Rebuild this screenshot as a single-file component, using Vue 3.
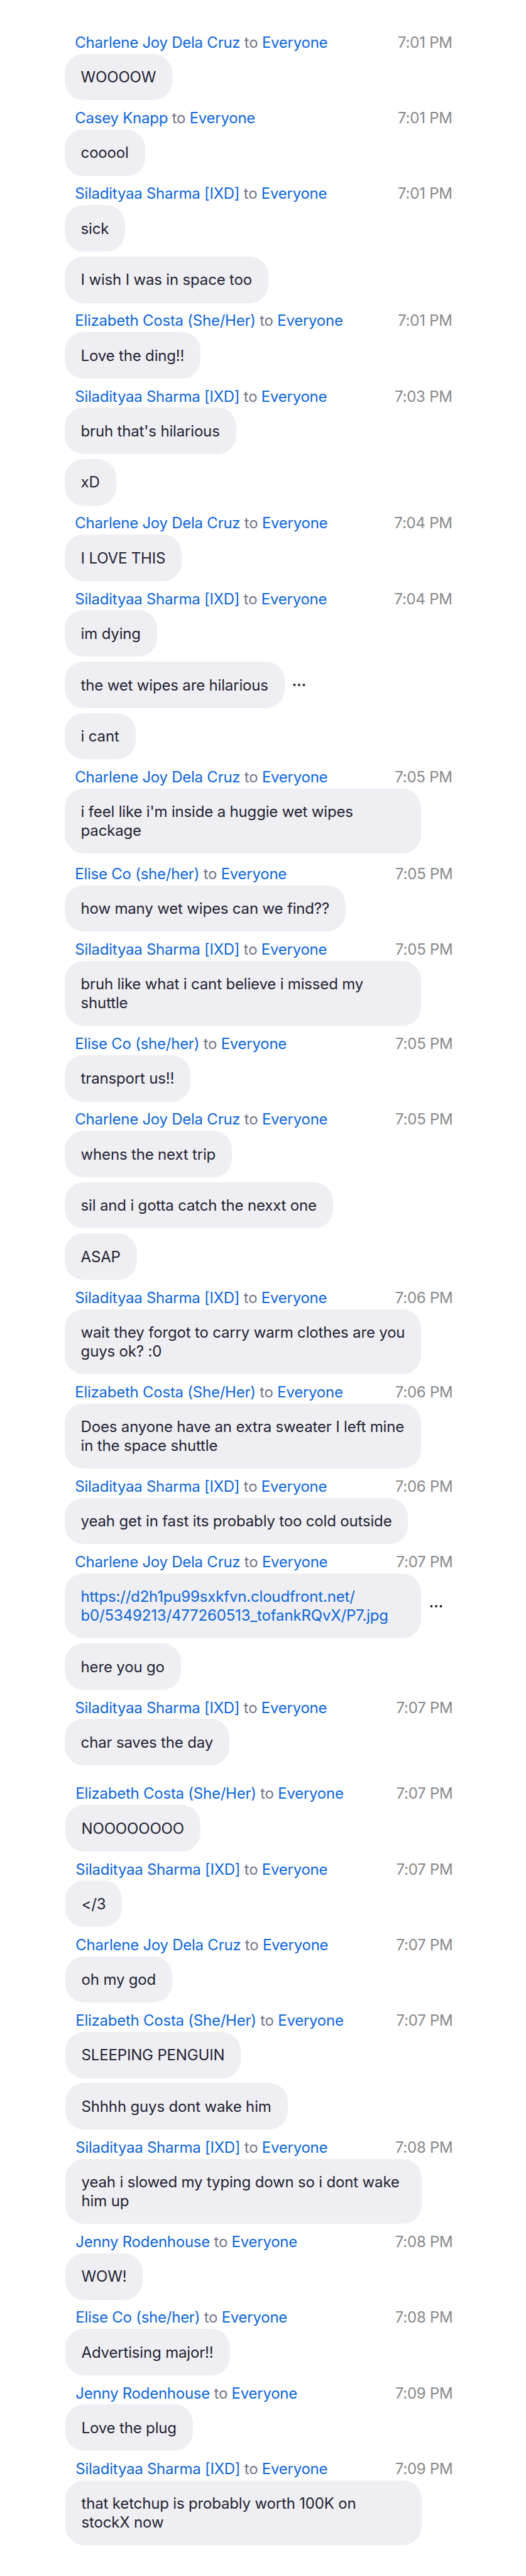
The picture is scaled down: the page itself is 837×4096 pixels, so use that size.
<template>
  <main class="chat">
    <section v-for="(section, i) in sections" :key="i" :class="['section', section.name]">
      <article v-for="(group, j) in section.groups" :key="j" class="group">
        <header class="group-header">
          <p class="route">
            <span class="person">{{ group.from }}</span> to <span class="person">Everyone</span>
          </p>
          <time class="time">{{ group.time }}</time>
        </header>
        <div class="messages">
          <div v-for="message in group.messages" :key="message.text" class="message">
            <p :class="['bubble', { wide: message.text.includes('\n'), link: message.link }]">{{ message.text }}</p>
            <svg v-if="message.more" class="more" viewBox="0 0 20 6" aria-label="More">
              <circle cx="2.5" cy="3" r="2" />
              <circle cx="10" cy="3" r="2" />
              <circle cx="17.5" cy="3" r="2" />
            </svg>
          </div>
        </div>
      </article>
    </section>
  </main>
</template>

<script setup>
const charlene = 'Charlene Joy Dela Cruz'
const casey = 'Casey Knapp'
const sil = 'Siladityaa Sharma [IXD]'
const elizabeth = 'Elizabeth Costa (She/Her)'
const elise = 'Elise Co (she/her)'
const jenny = 'Jenny Rodenhouse'

const group = (from, time, ...messages) => ({
  from,
  time: `${time} PM`,
  messages: messages.map((m) => (typeof m === 'string' ? { text: m } : m)),
})

const sections = [
  {
    name: 'first',
    groups: [
      group(charlene, '7:01', 'WOOOOW'),
      group(casey, '7:01', 'cooool'),
      group(sil, '7:01', 'sick', 'I wish I was in space too'),
      group(elizabeth, '7:01', 'Love the ding!!'),
      group(sil, '7:03', "bruh that's hilarious", 'xD'),
      group(charlene, '7:04', 'I LOVE THIS'),
      group(sil, '7:04', 'im dying', { text: 'the wet wipes are hilarious', more: true }, 'i cant'),
      group(charlene, '7:05', "i feel like i'm inside a huggie wet wipes\npackage"),
    ],
  },
  {
    name: 'second',
    groups: [
      group(elise, '7:05', 'how many wet wipes can we find??'),
      group(sil, '7:05', 'bruh like what i cant believe i missed my\nshuttle'),
      group(elise, '7:05', 'transport us!!'),
      group(charlene, '7:05', 'whens the next trip', 'sil and i gotta catch the nexxt one', 'ASAP'),
      group(sil, '7:06', 'wait they forgot to carry warm clothes are you\nguys ok? :0'),
      group(elizabeth, '7:06', 'Does anyone have an extra sweater I left mine\nin the space shuttle'),
      group(sil, '7:06', 'yeah get in fast its probably too cold outside'),
      group(
        charlene,
        '7:07',
        {
          text: 'https://d2h1pu99sxkfvn.cloudfront.net/\nb0/5349213/477260513_tofankRQvX/P7.jpg',
          link: true,
          more: true,
        },
        'here you go'
      ),
      group(sil, '7:07', 'char saves the day'),
    ],
  },
  {
    name: 'third',
    groups: [
      group(elizabeth, '7:07', 'NOOOOOOOO'),
      group(sil, '7:07', '</3'),
      group(charlene, '7:07', 'oh my god'),
      group(elizabeth, '7:07', 'SLEEPING PENGUIN', 'Shhhh guys dont wake him'),
      group(sil, '7:08', 'yeah i slowed my typing down so i dont wake\nhim up'),
      group(jenny, '7:08', 'WOW!'),
      group(elise, '7:08', 'Advertising major!!'),
      group(jenny, '7:09', 'Love the plug'),
      group(sil, '7:09', 'that ketchup is probably worth 100K on\nstockX now'),
    ],
  },
]
</script>

<style>
body {
  margin: 0;
  background: #ffffff;
}
</style>

<style scoped>
.chat {
  box-sizing: border-box;
  width: 837px;
  min-height: 4096px;
  padding-top: 39.1px;
  background: #ffffff;
  font-family: Inter, 'Liberation Sans', sans-serif;
  font-size: 24px;
  letter-spacing: -0.25px;
  color: #232333;
}

.section {
  padding: 0 117.3px 0 103.3px;
}

.section.second {
  padding-top: 3.7px;
  padding-right: 116.5px;
}

.section.third {
  padding: 16.3px 116.5px 0 104.3px;
}

.group-header {
  display: flex;
  justify-content: space-between;
  padding: 10.8px 0 0 16px;
  line-height: 35.7px;
}

.route {
  margin: 0;
  color: #747487;
}

.person {
  color: #0e66d9;
}

.time {
  color: #888888;
}

.messages {
  display: flex;
  flex-direction: column;
  gap: 7.75px;
}

.message {
  display: flex;
  align-items: center;
}

.bubble {
  box-sizing: border-box;
  margin: 0;
  padding: 22.6px 26px 21.5px 25.3px;
  border-radius: 30px;
  background: #eeeef3;
  line-height: 29.7px;
  letter-spacing: -0.17px;
  white-space: pre;
}

.bubble.wide {
  width: 567px;
}

.link {
  color: #0e66d9;
}

.more {
  width: 20px;
  height: 6px;
  margin-left: 13.5px;
  fill: #232333;
}
</style>
